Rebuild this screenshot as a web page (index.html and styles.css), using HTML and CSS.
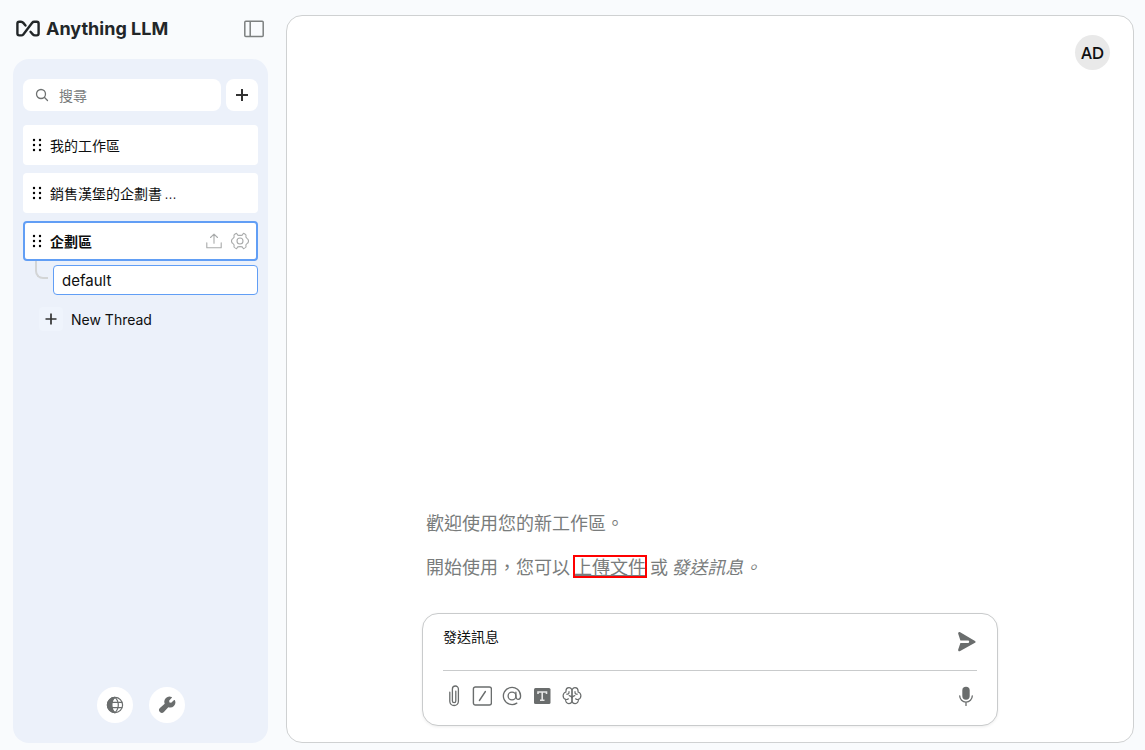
FILE: index.html
```html
<!DOCTYPE html>
<html lang="zh-Hant">
<head>
<meta charset="utf-8">
<meta name="viewport" content="width=device-width, initial-scale=1">
<title>Anything LLM</title>
<link rel="stylesheet" href="styles.css">
</head>
<body>
<svg class="sprite" aria-hidden="true">
  <symbol id="dots" viewBox="0 0 10 14"><g fill="#000"><circle cx="2" cy="2" r="1.2"/><circle cx="8" cy="2" r="1.2"/><circle cx="2" cy="7" r="1.2"/><circle cx="8" cy="7" r="1.2"/><circle cx="2" cy="12" r="1.2"/><circle cx="8" cy="12" r="1.2"/></g></symbol>
</svg>
<div class="app">
  <aside class="sidebar">
    <header class="brand-bar">
      <a class="brand" href="#">
        <svg width="24" height="18" viewBox="0 0 24 18" fill="none" stroke="#222628" stroke-width="2.4" stroke-linecap="round" stroke-linejoin="round"><path d="M9.5 5.5 7.3 2.9Q6.4 1.8 5 1.8H3.2Q1.4 1.8 1.4 3.6v10q0 1.8 1.8 1.8h2.1q1.2 0 2-1l8.9-11.6q.8-1 2-1h2.6q1.8 0 1.8 1.8v10q0 1.8-1.8 1.8H19q-1.3 0-2.2-1L14.5 11.8"/></svg>
        <span>Anything LLM</span>
      </a>
      <button class="icon-button" aria-label="Toggle sidebar">
        <svg width="20" height="18" viewBox="0 0 20 18" fill="none" stroke="#7d8080" stroke-width="1.5"><rect x=".8" y="1.2" width="18.4" height="15.4" rx="1"/><path d="M6.2 1v16"/></svg>
      </button>
    </header>
    <div class="panel">
      <div class="search-row">
        <label class="search">
          <svg width="14" height="14" viewBox="0 0 14 14" fill="none" stroke="#6f7272" stroke-width="1.3" stroke-linecap="round"><circle cx="6" cy="6" r="4.5"/><path d="m9.3 9.3 3.2 3.2"/></svg>
          <input type="search" placeholder="搜尋" aria-label="搜尋">
        </label>
        <button class="add" aria-label="New workspace"><svg width="12" height="12" viewBox="0 0 12 12" stroke="#333" stroke-width="2"><path d="M6 0v12M0 6h12"/></svg></button>
      </div>
      <nav class="workspaces">
        <a class="workspace" href="#"><svg width="10" height="14"><use href="#dots"/></svg><span>我的工作區</span></a>
        <a class="workspace" href="#"><svg width="10" height="14"><use href="#dots"/></svg><span>銷售漢堡的企劃書 ...</span></a>
        <div class="workspace active">
          <svg width="10" height="14"><use href="#dots"/></svg><a class="name" href="#">企劃區</a>
          <button class="icon-button" aria-label="Upload"><svg width="18" height="16" viewBox="0 0 18 16" fill="none" stroke="#a9abab" stroke-width="1.1" stroke-linecap="round" stroke-linejoin="round"><path d="M1.8 9.8v5h14.4v-5M9 10.2V1.2M5.5 4.5 9 1.1l3.5 3.4"/></svg></button>
          <button class="icon-button" aria-label="Settings"><svg width="18" height="18" viewBox="0 0 18 18" fill="none" stroke="#a9abab" stroke-width="1.1" stroke-linejoin="round"><circle cx="9" cy="9" r="3"/><path d="M6.8 3.1 5.5 1.2Q4 1.8 3 3l.1 2.1q-.5.8-1.1 1.3Q.5 7.1.5 9t1.5 2.6q.7.5 1.1 1.3L3 15q1 1.1 2.5 1.8l1.3-1.9q2.2-.5 4.4 0l1.3 1.9Q14 16.1 15 15l-.1-2.1q.4-.8 1.1-1.3 1.5-.7 1.5-2.6T16 6.4q-.7-.5-1.1-1.3L15 3q-1-1.2-2.5-1.8l-1.3 1.9q-2.2.5-4.4 0Z"/></svg></button>
        </div>
      </nav>
      <div class="thread-row">
        <span class="branch"></span>
        <a class="thread" href="#">default</a>
      </div>
      <button class="new-thread"><span class="plus"><svg width="12" height="12" viewBox="0 0 12 12" stroke="#333" stroke-width="1.7"><path d="M6 .5v11M.5 6h11"/></svg></span>New Thread</button>
      <footer class="tools">
        <button class="round" aria-label="Language"><svg width="18" height="18" viewBox="0 0 18 18" fill="none" stroke="#6a6d6d" stroke-width="1.2"><circle cx="9" cy="9" r="7.6"/><path d="M9 1.4C4 3 5 15 9 16.6A7.6 7.6 0 0 1 9 1.4Z" fill="#6a6d6d"/><path d="M9 1.4q-3.3 3-3.3 7.6T9 16.6q3.3-3 3.3-7.6T9 1.4M5.8 6.3h10.4M5.8 11.7h10.4"/></svg></button>
        <button class="round" aria-label="Settings"><svg width="18" height="18" viewBox="0 0 18 18" fill="#6a6d6d"><path d="M16.9 4.2a.5.5 0 0 0-.8-.1l-2.9 2.7-1.7-.4-.4-1.7 2.7-2.9a.5.5 0 0 0-.2-.8 5.2 5.2 0 0 0-6.9 6.7L1.9 12a2.8 2.8 0 0 0 4 4l4.4-4.8a5.2 5.2 0 0 0 6.6-7Z"/></svg></button>
      </footer>
    </div>
  </aside>
  <main class="chat">
    <button class="avatar">AD</button>
    <div class="column">
      <section class="welcome">
        <p>歡迎使用您的新工作區。</p>
        <p>開始使用，您可以 <a class="upload" href="#">上傳文件</a> 或 <em>發送訊息。</em></p>
      </section>
      <form class="composer">
        <div class="message">
          <textarea rows="1" placeholder="發送訊息" aria-label="發送訊息"></textarea>
          <button type="button" class="icon-button" aria-label="Send"><svg width="20" height="22" viewBox="0 0 20 22" fill="#6a6d6d"><path d="M18 10 3.2 1.3C2 .7.9 1.5 1.2 2.8L3.4 9.5H11a1 1 0 0 1 0 2.4H3.4L1.2 18.5c-.4 1.4.8 2.3 2 1.6L18 11.8c.8-.5.8-1.3 0-1.8Z"/></svg></button>
        </div>
        <div class="actions">
          <div class="group">
            <button type="button" class="icon-button" aria-label="Attach"><svg width="19" height="22" viewBox="0 0 19 22" fill="none" stroke="#6a6d6d" stroke-width="1.3" stroke-linecap="round"><path d="M6.8 7.2v9a4.3 4.3 0 0 0 8.6 0V4a3 3 0 0 0-6 0v12a1.7 1.7 0 0 0 3.4 0V6.2"/></svg></button>
            <button type="button" class="icon-button" aria-label="Commands"><svg width="20" height="20" viewBox="0 0 20 20" fill="none" stroke="#6a6d6d" stroke-width="1.4" stroke-linecap="round"><rect x="1.4" y="1" width="18" height="18" rx="2"/><path d="M13.4 5.5 7.4 14.5"/></svg></button>
            <button type="button" class="icon-button" aria-label="Agents"><svg width="20" height="20" viewBox="0 0 20 20" fill="none" stroke="#6a6d6d" stroke-width="1.3" stroke-linecap="round"><circle cx="10" cy="10" r="3.9"/><path d="M13.9 6.2V10c0 4.7 4.7 4.2 4.7 0A8.6 8.6 0 1 0 14.8 17.1"/></svg></button>
            <button type="button" class="icon-button" aria-label="Text size"><svg width="20" height="20" viewBox="0 0 20 20"><rect x="2" y="2" width="16.5" height="16" rx="1.5" fill="#6a6d6d"/><path d="M6 8V6h8.5v2M10.2 6v8.2M8 14.2h4.5" fill="none" stroke="#e7e7e7" stroke-width="1.6"/></svg></button>
            <button type="button" class="icon-button" aria-label="Model"><svg width="20" height="20" viewBox="0 0 20 20" fill="none" stroke="#6a6d6d" stroke-width="1.2" stroke-linecap="round" stroke-linejoin="round"><path id="half" d="M10 4.6A3 3 0 0 0 4 4.8Q3.8 5.4 4 6A3.9 3.9 0 0 0 3.6 13.4C3.4 15.8 4.8 17.6 6.8 17.6 8.6 17.6 10 16.4 10 14.6V4.6M10 12.6Q9.8 10 7.2 9.6M7 5.6v.8q0 1.8-2.2 1.8M3.6 13.4q1.6.4 2.8-.6"/><use href="#half" transform="matrix(-1 0 0 1 20 0)"/></svg></button>
          </div>
          <button type="button" class="icon-button" aria-label="Voice"><svg width="20" height="20" viewBox="0 0 20 20" fill="none" stroke="#6a6d6d" stroke-width="1.3" stroke-linecap="round"><rect x="5.3" y=".8" width="7.4" height="13" rx="3.7" fill="#6a6d6d" stroke="none"/><path d="M2.7 9.8a6.3 6.3 0 0 0 12.6 0M9 16.2v3.2"/></svg></button>
        </div>
      </form>
    </div>
  </main>
</div>
</body>
</html>
```

FILE: styles.css
```css
* { box-sizing: border-box; }

body {
  margin: 0;
  background: #f9fbfd;
  color: #0e0f0f;
  font-family: "Plus Jakarta Sans", "Noto Sans", "Noto Sans CJK TC", sans-serif;
  font-size: 14px;
}

a { color: inherit; text-decoration: none; }
button, input, textarea { font: inherit; color: inherit; border: 0; padding: 0; background: none; outline: 0; }
button { cursor: pointer; }
svg { display: block; flex: none; }
.sprite { position: absolute; width: 0; height: 0; }

.app { display: flex; gap: 18px; height: 100vh; padding: 0 11px 7px 13px; }

.sidebar { display: flex; flex-direction: column; flex: none; width: 255px; }
.brand-bar { display: flex; align-items: center; justify-content: space-between; height: 59px; padding: 0 4px 2px 3px; }
.brand { display: flex; align-items: center; gap: 6px; color: #222628; font-family: Inter, sans-serif; font-size: 18px; font-weight: 700; white-space: nowrap; }
.icon-button { display: flex; align-items: center; justify-content: center; }

.panel { display: flex; flex: 1; flex-direction: column; padding: 20px 10px; border-radius: 16px; background: #ecf1fa; }
.search-row { display: flex; gap: 5px; margin-bottom: 14px; }
.search { display: flex; flex: 1; align-items: center; gap: 10px; height: 32px; min-width: 0; padding: 0 12px; border-radius: 8px; background: #fff; }
.search input { width: 100%; min-width: 0; }
.search input::placeholder { color: #7a7d7e; opacity: 1; }
.add { display: flex; align-items: center; justify-content: center; width: 32px; border-radius: 8px; background: #fff; }

.workspaces { display: flex; flex-direction: column; gap: 8px; }
.workspace { display: flex; align-items: center; gap: 8px; height: 40px; padding: 0 9px; border-radius: 4px; background: #fff; }
.workspace.active { padding: 0 7px; border: 2px solid #619ef5; font-weight: 700; }
.name { flex: 1; }

.thread-row { display: flex; gap: 5px; margin-top: 4px; padding-left: 12px; }
.branch { width: 13px; height: 18px; margin-top: -4px; border: solid #d3d5d6; border-width: 0 0 2px 2px; border-bottom-left-radius: 8px; }
.thread { flex: 1; height: 30px; padding-left: 8px; border: 1px solid #619ef5; border-radius: 4px; background: #fff; font-family: Inter, sans-serif; font-size: 15px; line-height: 30px; }
.new-thread { display: flex; align-items: center; gap: 8px; margin-top: 12px; padding-left: 16px; font-family: Inter, sans-serif; }
.plus { display: flex; align-items: center; justify-content: center; width: 24px; height: 24px; border-radius: 4px; background: #eff4fc; }

.tools { display: flex; justify-content: center; gap: 16px; margin-top: auto; }
.round { display: flex; align-items: center; justify-content: center; width: 36px; height: 36px; border-radius: 50%; background: #fff; }

.chat { display: flex; flex: 1; flex-direction: column; justify-content: space-between; min-width: 0; margin-top: 15px; padding: 19px 23px 16px; border: 1px solid #cfd1d2; border-radius: 16px; background: #fff; }
.avatar { align-self: flex-end; width: 35px; height: 35px; border-radius: 50%; background: #e9e9e9; font-size: 16px; font-weight: 600; }
.column { align-self: center; width: 100%; max-width: 576px; }
.welcome { padding: 0 4px 32px; color: #797c7c; font-size: 18px; line-height: 28px; }
.welcome p { margin: 0 0 16px; }
.welcome p:last-child { margin: 0; }
.upload { padding: 0 1px; outline: 2px solid #f00; outline-offset: -2px; text-decoration: underline; }

.composer { padding: 11px 20px 18px; border: 1px solid #c9cbcc; border-radius: 16px; background: #fff; box-shadow: 0 1px 3px #00000012; }
.message { display: flex; justify-content: space-between; height: 46px; border-bottom: 1px solid #c9cbcc; }
.message textarea { flex: 1; height: 22px; line-height: 22px; resize: none; }
.message textarea::placeholder { color: #0e0f0f; opacity: 1; }
.message .icon-button { height: 34px; }
.actions { display: flex; align-items: center; justify-content: space-between; padding-top: 14px; }
.group { display: flex; align-items: center; gap: 10px; }
```
